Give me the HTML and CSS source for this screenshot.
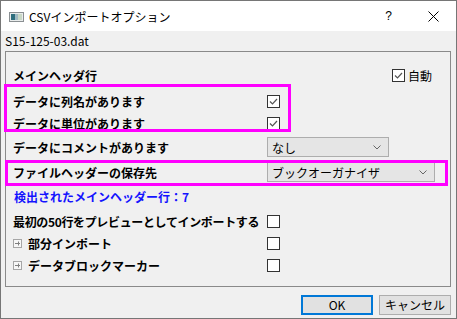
FILE: index.html
```html
<!DOCTYPE html>
<html lang="ja">
<head>
  <meta charset="UTF-8">
  <title>CSVインポートオプション</title>
  <link rel="stylesheet" href="styles.css">
</head>
<body>
<div class="window">
  <div class="titlebar">
    <svg class="app-icon" width="15" height="10" viewBox="0 0 15 10">
      <rect x="0.5" y="0.5" width="14" height="9" fill="#e9ecec" stroke="#8a8f92"/>
      <rect x="2" y="2" width="4" height="6" fill="#2f6f7e"/>
      <rect x="6" y="2" width="3" height="6" fill="#9fb9c2"/>
      <rect x="9" y="2" width="4" height="6" fill="#c9d8c6"/>
    </svg>
    <span class="title">CSVインポートオプション</span>
    <span class="help">?</span>
    <svg class="close" width="11" height="11" viewBox="0 0 11 11">
      <path d="M0.5 0.5 L10.5 10.5 M10.5 0.5 L0.5 10.5" stroke="#000" stroke-width="1"/>
    </svg>
  </div>
  <div class="filename">S15-125-03.dat</div>

  <div class="group">
    <div class="row row-head">
      <span class="label">メインヘッダ行</span>
      <span class="auto">
        <span class="check"><svg width="11" height="11" viewBox="0 0 11 11"><polyline points="2,5.5 4.5,8 9,3" fill="none" stroke="#555" stroke-width="1.2"/></svg></span>
        <span>自動</span>
      </span>
    </div>

    <div class="mark mark-names">
      <div class="row">
        <span class="label">データに列名があります</span>
        <span class="check"><svg width="11" height="11" viewBox="0 0 11 11"><polyline points="2,5.5 4.5,8 9,3" fill="none" stroke="#555" stroke-width="1.2"/></svg></span>
      </div>
      <div class="row">
        <span class="label">データに単位があります</span>
        <span class="check"><svg width="11" height="11" viewBox="0 0 11 11"><polyline points="2,5.5 4.5,8 9,3" fill="none" stroke="#555" stroke-width="1.2"/></svg></span>
      </div>
    </div>

    <div class="row row-comment">
      <span class="label">データにコメントがあります</span>
      <div class="select select-short">
        <span>なし</span>
        <svg width="8" height="5" viewBox="0 0 8 5"><polyline points="0.5,0.5 4,4 7.5,0.5" fill="none" stroke="#666"/></svg>
      </div>
    </div>

    <div class="mark mark-save">
      <div class="row">
        <span class="label">ファイルヘッダーの保存先</span>
        <div class="select select-long">
          <span>ブックオーガナイザ</span>
          <svg width="8" height="5" viewBox="0 0 8 5"><polyline points="0.5,0.5 4,4 7.5,0.5" fill="none" stroke="#666"/></svg>
        </div>
      </div>
    </div>

    <div class="row row-found">
      <span class="label found">検出されたメインヘッダー行：7</span>
    </div>

    <div class="row row-preview">
      <span class="label tight">最初の50行をプレビューとしてインポートする</span>
      <span class="check"></span>
    </div>
    <div class="row">
      <span class="label"><svg class="expand" width="9" height="9" viewBox="0 0 9 9"><rect x="0.5" y="0.5" width="8" height="8" fill="#f7f7f7" stroke="#a6a6a6"/><path d="M2 4.5 H7 M5.5 2.5 V6.5" stroke="#808080"/></svg>部分インポート</span>
      <span class="check"></span>
    </div>
    <div class="row">
      <span class="label"><svg class="expand" width="9" height="9" viewBox="0 0 9 9"><rect x="0.5" y="0.5" width="8" height="8" fill="#f7f7f7" stroke="#a6a6a6"/><path d="M2 4.5 H7 M5.5 2.5 V6.5" stroke="#808080"/></svg>データブロックマーカー</span>
      <span class="check"></span>
    </div>
  </div>

  <div class="buttons">
    <button class="btn btn-default">OK</button>
    <button class="btn">キャンセル</button>
  </div>
</div>
</body>
</html>
```

FILE: styles.css
```css
body {
  margin: 0;
  font-family: "Noto Sans CJK JP", "Noto Sans", sans-serif;
  font-size: 12px;
  color: #000;
  background: #fff;
}
.window {
  width: 457px;
  height: 319px;
  box-sizing: border-box;
  border: 1px solid #767676;
  background: #f0f0f0;
  overflow: hidden;
}
.titlebar {
  height: 30px;
  background: #fff;
  display: flex;
  align-items: center;
}
.app-icon {
  margin-left: 8px;
  margin-top: 1px;
}
.title {
  margin-left: 5px;
  font-size: 12px;
  flex: 1;
}
.help {
  font-family: "Liberation Sans", sans-serif;
  font-size: 12px;
  margin-right: 36px;
}
.close {
  margin-right: 17px;
}
.filename {
  height: 20px;
  line-height: 20px;
  padding-left: 4px;
}
.group {
  margin-left: 4px;
  width: 446px;
  box-sizing: border-box;
  border: 1px solid #8a8a8a;
  padding: 12px 0 10px 0;
}
.row {
  display: grid;
  grid-template-columns: 261px 1fr;
  align-items: center;
  height: 22px;
}
.label {
  padding-left: 7px;
  font-weight: bold;
  white-space: nowrap;
  display: flex;
  align-items: center;
}
.tight {
  letter-spacing: -0.35px;
}
.row-head {
  display: flex;
  justify-content: space-between;
  margin-bottom: 4px;
}
.auto {
  display: flex;
  align-items: center;
  gap: 3px;
  padding-right: 18px;
}
.check {
  width: 11px;
  height: 11px;
  border: 1px solid #333;
  background: #fff;
  display: block;
}
.check svg {
  display: block;
}
.mark {
  position: relative;
}
.mark::after {
  content: "";
  position: absolute;
  border: 3px solid #ff00ff;
  box-sizing: border-box;
  pointer-events: none;
}
.mark-names::after {
  left: -2px;
  top: -6px;
  width: 287px;
  height: 48px;
}
.mark-save {
  margin-top: 3px;
}
.mark-save::after {
  left: -1px;
  top: -1px;
  width: 443px;
  height: 26px;
}
.row-comment {
  margin-top: 2px;
}
.select {
  height: 20px;
  box-sizing: border-box;
  border: 1px solid #adadad;
  background: #e5e5e5;
  display: flex;
  align-items: center;
  justify-content: space-between;
  padding: 0 7px 0 4px;
}
.select-short {
  width: 122px;
}
.select-long {
  width: 168px;
}
.row-found {
  margin-top: 2px;
}
.found {
  color: #1414ff;
  padding-left: 8px;
}
.row-preview {
  margin-top: 3px;
}
.expand {
  margin-right: 6px;
}
.buttons {
  display: flex;
  justify-content: flex-end;
  gap: 6px;
  margin-top: 8px;
  padding-right: 5px;
}
.btn {
  width: 72px;
  height: 20px;
  box-sizing: border-box;
  border: 1px solid #adadad;
  background: #e1e1e1;
  font-family: "Noto Sans CJK JP", sans-serif;
  font-size: 12px;
  line-height: 1;
  padding: 0;
  color: #000;
  display: block;
}
.btn-default {
  border: 2px solid #0078d7;
}
```
